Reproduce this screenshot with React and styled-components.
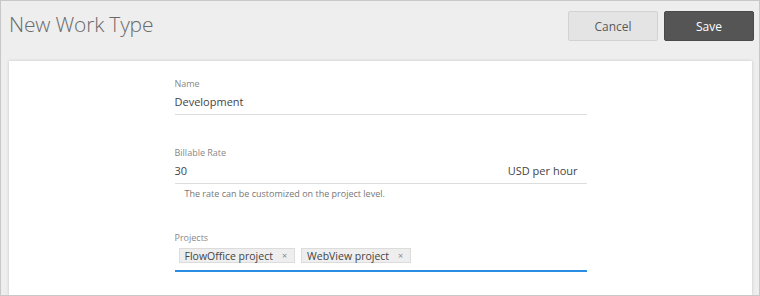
import React from 'react';
import styled, { createGlobalStyle } from 'styled-components';

const Global = createGlobalStyle`
	html, body {
		margin: 0;
		padding: 0;
		background: #ffffff;
	}
	* {
		box-sizing: border-box;
	}
`;

const Frame = styled.div`
	width: 760px;
	height: 296px;
	border: 1px solid #c8c8c8;
	background: #eeeeee;
	overflow: hidden;
	font-family: 'Open Sans', 'Segoe UI', sans-serif;
	display: flex;
	flex-direction: column;
`;

const Header = styled.div`
	display: flex;
	align-items: flex-start;
	justify-content: space-between;
	height: 60px;
	padding: 10px 5px 0 8px;
`;

const Title = styled.h1`
	margin: 0;
	font-size: 21px;
	line-height: 26px;
	font-weight: 300;
	color: #6a6a6a;
	letter-spacing: -0.2px;
`;

const Actions = styled.div`
	display: flex;
	gap: 6px;
`;

const Button = styled.button`
	width: 90px;
	height: 30px;
	border-radius: 2px;
	font-family: inherit;
	font-size: 12px;
	cursor: pointer;
	border: 1px solid ${(p) => (p.$primary ? '#4a4a4a' : '#d2d2d2')};
	background: ${(p) => (p.$primary ? '#555555' : '#e4e4e4')};
	color: ${(p) => (p.$primary ? '#ffffff' : '#5a5a5a')};
`;

const Card = styled.div`
	flex: 1;
	margin: 0 7px 0 8px;
	background: #ffffff;
	box-shadow: 0 0 3px rgba(0, 0, 0, 0.18);
	display: flex;
	justify-content: center;
	padding-top: 16px;
`;

const Form = styled.div`
	width: 412px;
	display: flex;
	flex-direction: column;
`;

const Field = styled.div`
	margin-bottom: ${(p) => p.$gap || 0}px;
`;

const Label = styled.div`
	font-size: 9px;
	line-height: 14px;
	color: #888888;
`;

const InputRow = styled.div`
	display: flex;
	align-items: center;
	justify-content: space-between;
	margin-top: 1px;
	padding-bottom: 2px;
	border-bottom: ${(p) => (p.$focused ? '2px solid #2a8de4' : '1px solid #dddddd')};
`;

const Value = styled.span`
	font-size: 11px;
	line-height: 20px;
	color: #444444;
	padding: 0 ${(p) => p.$indent || 0}px;
`;

const Hint = styled.div`
	margin-top: 4px;
	padding-left: 10px;
	font-size: 9px;
	line-height: 12px;
	color: #777777;
`;

const Tags = styled.div`
	display: flex;
	gap: 6px;
	padding: 2px 4px 5px;
`;

const Tag = styled.span`
	display: inline-flex;
	align-items: center;
	height: 15px;
	padding: 0 7px 0 5px;
	background: #eeeeee;
	border: 1px solid #dcdcdc;
	font-size: 10.5px;
	color: #444444;
`;

const Remove = styled.span`
	margin-left: 9px;
	font-size: 9px;
	color: #888888;
`;

export default function App() {
	return (
		<>
			<Global />
			<Frame>
				<Header>
					<Title>New Work Type</Title>
					<Actions>
						<Button>Cancel</Button>
						<Button $primary>Save</Button>
					</Actions>
				</Header>
				<Card>
					<Form>
						<Field $gap={31}>
							<Label>Name</Label>
							<InputRow>
								<Value>Development</Value>
							</InputRow>
						</Field>
						<Field $gap={31}>
							<Label>Billable Rate</Label>
							<InputRow>
								<Value>30</Value>
								<Value $indent={9}>USD per hour</Value>
							</InputRow>
							<Hint>The rate can be customized on the project level.</Hint>
						</Field>
						<Field>
							<Label>Projects</Label>
							<InputRow $focused>
								<Tags>
									<Tag>
										FlowOffice project<Remove>×</Remove>
									</Tag>
									<Tag>
										WebView project<Remove>×</Remove>
									</Tag>
								</Tags>
							</InputRow>
						</Field>
					</Form>
				</Card>
			</Frame>
		</>
	);
}
